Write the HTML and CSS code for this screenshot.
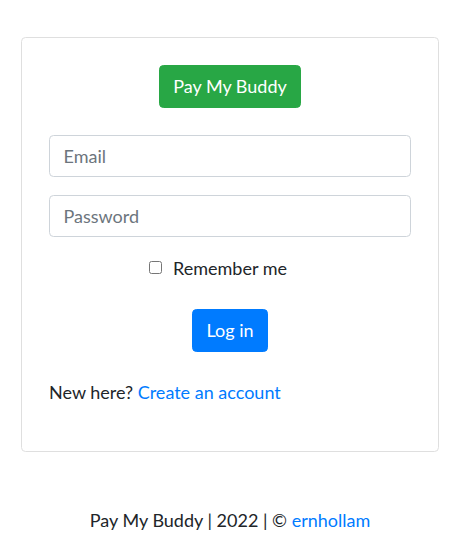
FILE: index.html
```html
<!DOCTYPE html>
<html lang="en">
<head>
<meta charset="utf-8">
<title>Pay My Buddy - Log in</title>
<link rel="stylesheet" href="styles.css">
</head>
<body>
<main class="page">
  <div class="card">
    <form class="card-body">
      <div class="brand-row"><a class="btn btn-success" href="#">Pay My Buddy</a></div>
      <input class="form-control first" type="email" placeholder="Email">
      <input class="form-control" type="password" placeholder="Password">
      <div class="remember">
        <label class="check"><input type="checkbox" class="check-input"><span>Remember me</span></label>
      </div>
      <div class="submit-row"><button type="submit" class="btn btn-primary">Log in</button></div>
      <p class="signup">New here? <a href="#">Create an account</a></p>
    </form>
  </div>
  <footer class="footer">Pay My Buddy | 2022 | © <a href="#">ernhollam</a></footer>
</main>
</body>
</html>
```
FILE: styles.css
```css
html, body {
  margin: 0;
  padding: 0;
  background: #fff;
}
body {
  font-family: Lato, "Liberation Sans", sans-serif;
  font-size: 18px;
  line-height: 27px;
  color: #212529;
}
a {
  color: #007bff;
  text-decoration: none;
}
.page {
  padding: 37px 16px 0 21px;
}
.card {
  border: 1px solid #dfdfdf;
  border-radius: 4.5px;
  background: #fff;
}
.card-body {
  padding: 27px;
  display: flex;
  flex-direction: column;
  margin: 0;
}
.brand-row, .submit-row {
  display: flex;
  justify-content: center;
}
.btn {
  display: inline-block;
  font-family: inherit;
  font-size: 18px;
  line-height: 27px;
  padding: 7px 13.5px;
  border: 1px solid transparent;
  border-radius: 4.5px;
  color: #fff;
  cursor: pointer;
}
.btn-success {
  background: #28a745;
  border-color: #28a745;
}
.btn-primary {
  background: #007bff;
  border-color: #007bff;
}
.form-control {
  display: block;
  box-sizing: border-box;
  width: 100%;
  height: 42px;
  margin: 0 0 18px 0;
  padding: 6.75px 13.5px;
  font-family: inherit;
  font-size: 18px;
  line-height: 27px;
  color: #495057;
  background: #fff;
  border: 1px solid #ced4da;
  border-radius: 4.5px;
}
.form-control::placeholder {
  color: #6c757d;
  opacity: 1;
}
.form-control.first {
  margin-top: 27px;
}
.remember {
  display: flex;
  justify-content: center;
  margin-bottom: 27px;
}
.check {
  display: inline-flex;
  align-items: center;
}
.check-input {
  width: 13px;
  height: 13px;
  margin: -3px 11px 0 -24px;
}
.signup {
  margin: 27px 0 18px 0;
}
.footer {
  margin-top: 55px;
  text-align: center;
}
```
